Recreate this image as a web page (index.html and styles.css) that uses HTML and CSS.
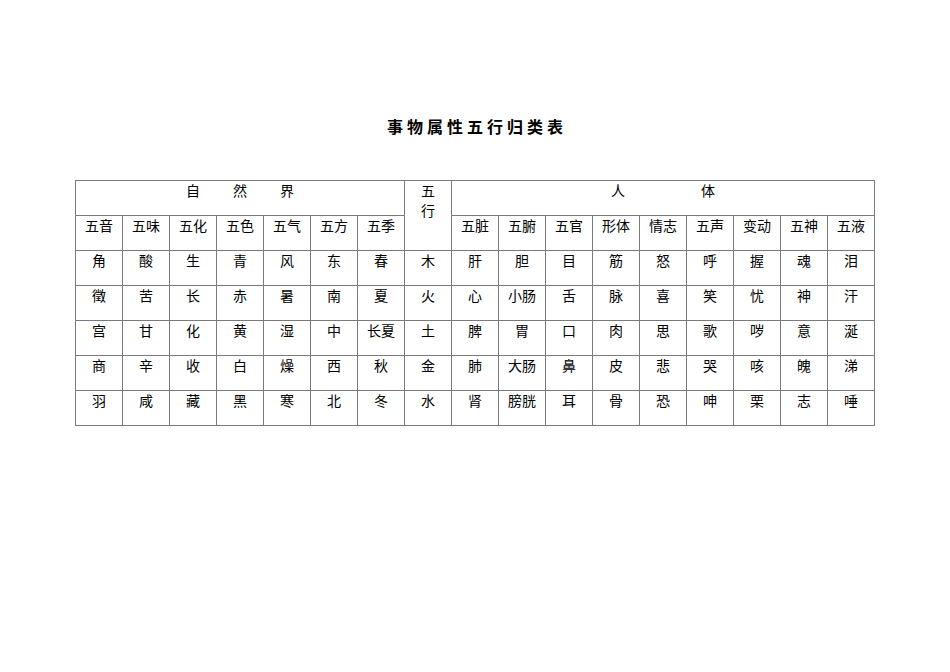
FILE: index.html
```html
<!DOCTYPE html>
<html lang="zh-CN">
<head>
<meta charset="utf-8">
<title>事物属性五行归类表</title>
<link rel="stylesheet" href="styles.css">
</head>
<body>
<div class="page">
  <h1 class="title">事物属性五行归类表</h1>
  <div class="grid">
    <div class="cell group nature"><span>自</span><span>然</span><span>界</span></div>
    <div class="cell wuxing"><span class="line">五</span><span class="line">行</span></div>
    <div class="cell group body-group"><span>人</span><span>体</span></div>

    <div class="cell">五音</div><div class="cell">五味</div><div class="cell">五化</div><div class="cell">五色</div><div class="cell">五气</div><div class="cell">五方</div><div class="cell">五季</div>
    <div class="cell">五脏</div><div class="cell">五腑</div><div class="cell">五官</div><div class="cell">形体</div><div class="cell">情志</div><div class="cell">五声</div><div class="cell">变动</div><div class="cell">五神</div><div class="cell">五液</div>

    <div class="cell">角</div><div class="cell">酸</div><div class="cell">生</div><div class="cell">青</div><div class="cell">风</div><div class="cell">东</div><div class="cell">春</div><div class="cell">木</div>
    <div class="cell">肝</div><div class="cell">胆</div><div class="cell">目</div><div class="cell">筋</div><div class="cell">怒</div><div class="cell">呼</div><div class="cell">握</div><div class="cell">魂</div><div class="cell">泪</div>

    <div class="cell">徵</div><div class="cell">苦</div><div class="cell">长</div><div class="cell">赤</div><div class="cell">暑</div><div class="cell">南</div><div class="cell">夏</div><div class="cell">火</div>
    <div class="cell">心</div><div class="cell">小肠</div><div class="cell">舌</div><div class="cell">脉</div><div class="cell">喜</div><div class="cell">笑</div><div class="cell">忧</div><div class="cell">神</div><div class="cell">汗</div>

    <div class="cell">宫</div><div class="cell">甘</div><div class="cell">化</div><div class="cell">黄</div><div class="cell">湿</div><div class="cell">中</div><div class="cell">长夏</div><div class="cell">土</div>
    <div class="cell">脾</div><div class="cell">胃</div><div class="cell">口</div><div class="cell">肉</div><div class="cell">思</div><div class="cell">歌</div><div class="cell">哕</div><div class="cell">意</div><div class="cell">涎</div>

    <div class="cell">商</div><div class="cell">辛</div><div class="cell">收</div><div class="cell">白</div><div class="cell">燥</div><div class="cell">西</div><div class="cell">秋</div><div class="cell">金</div>
    <div class="cell">肺</div><div class="cell">大肠</div><div class="cell">鼻</div><div class="cell">皮</div><div class="cell">悲</div><div class="cell">哭</div><div class="cell">咳</div><div class="cell">魄</div><div class="cell">涕</div>

    <div class="cell">羽</div><div class="cell">咸</div><div class="cell">藏</div><div class="cell">黑</div><div class="cell">寒</div><div class="cell">北</div><div class="cell">冬</div><div class="cell">水</div>
    <div class="cell">肾</div><div class="cell">膀胱</div><div class="cell">耳</div><div class="cell">骨</div><div class="cell">恐</div><div class="cell">呻</div><div class="cell">栗</div><div class="cell">志</div><div class="cell">唾</div>
  </div>
</div>
</body>
</html>
```

FILE: styles.css
```css
html, body {
  margin: 0;
  padding: 0;
  background: #ffffff;
}

.page {
  width: 950px;
  padding-top: 116px;
  font-family: "Noto Sans CJK SC", "Noto Sans CJK JP", sans-serif;
  color: #000000;
}

.title {
  margin: 0 0 44px 0;
  padding-left: 4px;
  font-size: 16px;
  line-height: 20px;
  font-weight: 700;
  letter-spacing: 4px;
  text-align: center;
}

.grid {
  display: grid;
  grid-template-columns: repeat(17, 47px);
  grid-template-rows: repeat(7, 35px);
  width: max-content;
  margin-left: 75px;
  border-left: 1px solid #7a7a7a;
  border-top: 1px solid #7a7a7a;
}

.cell {
  border-right: 1px solid #7a7a7a;
  border-bottom: 1px solid #7a7a7a;
  font-size: 14px;
  line-height: 16px;
  text-align: center;
  padding-top: 1px;
}

.group {
  display: flex;
  justify-content: center;
  align-items: flex-start;
}

.nature {
  grid-column: 1 / span 7;
  gap: 33px;
}

.wuxing {
  grid-column: 8;
  grid-row: 1 / span 2;
  display: flex;
  flex-direction: column;
  align-items: center;
  gap: 4px;
}

.line {
  display: block;
  line-height: 16px;
}

.body-group {
  grid-column: 9 / span 9;
  gap: 76px;
}
```
